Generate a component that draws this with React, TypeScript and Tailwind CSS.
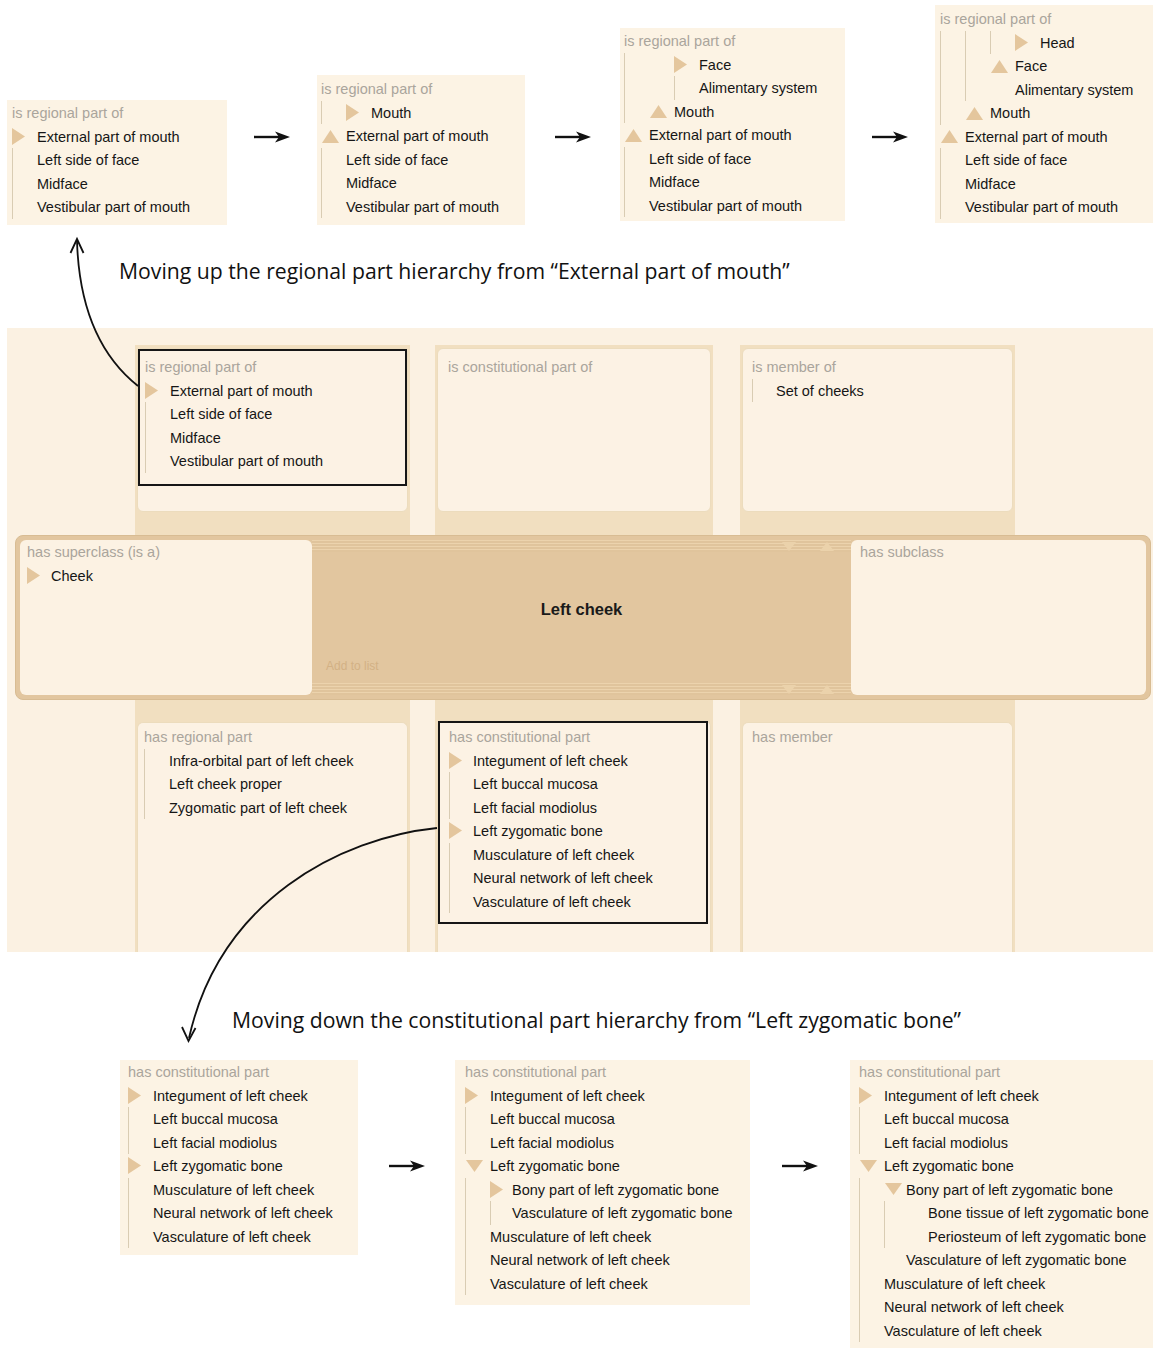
import React from "react";
import clsx from "clsx";

type Dir = "right" | "up" | "down";
type Row = { label: string; depth: number; icon?: Dir; guides?: number[] };

const TRI = "#e4c69d";

const Tri = ({ dir }: { dir: Dir }) => {
  if (dir === "right")
    return (
      <svg width="13" height="17" viewBox="0 0 13 17" className="shrink-0">
        <polygon points="0,0 13,8.5 0,17" fill={TRI} />
      </svg>
    );
  if (dir === "up")
    return (
      <svg width="17" height="13" viewBox="0 0 17 13" className="ml-[1px] mt-[1px] shrink-0">
        <polygon points="8.5,0 17,13 0,13" fill={TRI} />
      </svg>
    );
  return (
    <svg width="17" height="12" viewBox="0 0 17 12" className="ml-[1px] shrink-0">
      <polygon points="0,0 17,0 8.5,12" fill={TRI} />
    </svg>
  );
};

const Tree = ({
  header,
  rows,
  first = "w-[25px]",
  step = "w-[25px]",
}: {
  header: string;
  rows: Row[];
  first?: string;
  step?: string;
}) => (
  <div className="text-[14.5px]">
    <div className="h-[23.5px] leading-[24px] whitespace-nowrap text-[#aaa59c]">{header}</div>
    {rows.map((r, i) => (
      <div key={i} className="flex h-[23.5px] items-stretch whitespace-nowrap text-[#161616]">
        {Array.from({ length: r.depth + 1 }, (_, l) => (
          <span
            key={l}
            className={clsx(
              "flex shrink-0 items-center",
              l === 0 ? first : step,
              r.guides?.includes(l) && "border-l border-[#d9ccb3]"
            )}
          >
            {l === r.depth && r.icon ? <Tri dir={r.icon} /> : null}
          </span>
        ))}
        <span className="leading-[24px]">{r.label}</span>
      </div>
    ))}
  </div>
);

const Arrow = ({ className }: { className: string }) => (
  <div className={clsx("flex shrink-0 justify-center", className)}>
    <svg width="36" height="16" viewBox="0 0 36 16">
      <line x1="0" y1="8" x2="28" y2="8" stroke="#111" strokeWidth="2.4" />
      <polygon points="21,2.5 36,8 21,13.5 25,8" fill="#111" />
    </svg>
  </div>
);

const base: Row[] = [
  { label: "Left side of face", depth: 0, guides: [0] },
  { label: "Midface", depth: 0, guides: [0] },
  { label: "Vestibular part of mouth", depth: 0, guides: [0] },
];

const up1: Row[] = [{ label: "External part of mouth", depth: 0, icon: "right" }, ...base];

const up2: Row[] = [
  { label: "Mouth", depth: 1, icon: "right", guides: [0] },
  { label: "External part of mouth", depth: 0, icon: "up" },
  ...base,
];

const up3: Row[] = [
  { label: "Face", depth: 2, icon: "right", guides: [0] },
  { label: "Alimentary system", depth: 2, guides: [0, 2] },
  { label: "Mouth", depth: 1, icon: "up", guides: [0] },
  { label: "External part of mouth", depth: 0, icon: "up" },
  ...base,
];

const up4: Row[] = [
  { label: "Head", depth: 3, icon: "right", guides: [0, 1, 2] },
  { label: "Face", depth: 2, icon: "up", guides: [0, 1] },
  { label: "Alimentary system", depth: 2, guides: [0, 1] },
  { label: "Mouth", depth: 1, icon: "up", guides: [0] },
  { label: "External part of mouth", depth: 0, icon: "up" },
  ...base,
];

const tail: Row[] = [
  { label: "Musculature of left cheek", depth: 0, guides: [0] },
  { label: "Neural network of left cheek", depth: 0, guides: [0] },
  { label: "Vasculature of left cheek", depth: 0, guides: [0] },
];

const head: Row[] = [
  { label: "Integument of left cheek", depth: 0, icon: "right" },
  { label: "Left buccal mucosa", depth: 0, guides: [0] },
  { label: "Left facial modiolus", depth: 0, guides: [0] },
];

const down1: Row[] = [...head, { label: "Left zygomatic bone", depth: 0, icon: "right" }, ...tail];

const down2: Row[] = [
  ...head,
  { label: "Left zygomatic bone", depth: 0, icon: "down" },
  { label: "Bony part of left zygomatic bone", depth: 1, icon: "right", guides: [0] },
  { label: "Vasculature of left zygomatic bone", depth: 1, guides: [0, 1] },
  ...tail,
];

const down3: Row[] = [
  ...head,
  { label: "Left zygomatic bone", depth: 0, icon: "down" },
  { label: "Bony part of left zygomatic bone", depth: 1, icon: "down", guides: [0] },
  { label: "Bone tissue of left zygomatic bone", depth: 2, guides: [0, 1] },
  { label: "Periosteum of left zygomatic bone", depth: 2, guides: [0, 1] },
  { label: "Vasculature of left zygomatic bone", depth: 1, guides: [0] },
  ...tail,
];

const Stripe = () => (
  <div className="flex h-[12px] shrink-0 items-center justify-end gap-[24px] bg-[repeating-linear-gradient(to_bottom,#ecd3ad_0px,#ecd3ad_1px,#e0c49c_1px,#e0c49c_3px)] pr-[17px]">
    <svg width="14" height="9" viewBox="0 0 14 9">
      <polygon points="0,0 14,0 7,9" fill="#ebd2ab" />
    </svg>
    <svg width="14" height="9" viewBox="0 0 14 9">
      <polygon points="7,0 14,9 0,9" fill="#ebd2ab" />
    </svg>
  </div>
);

export default function App() {
  return (
    <div className="relative h-[1348px] w-[1153px] overflow-hidden bg-white font-['Liberation_Sans',Arial,sans-serif]">
      {/* top sequence */}
      <div className="flex h-[240px] items-start">
        <div className="ml-[7px] mt-[100px] h-[125px] w-[220px] shrink-0 bg-[#fcf3e4] pl-[5px] pt-[1px]">
          <Tree header="is regional part of" rows={up1} />
        </div>
        <Arrow className="mt-[129px] w-[90px]" />
        <div className="mt-[75px] h-[150px] w-[208px] shrink-0 bg-[#fcf3e4] pl-[4px] pt-[2px]">
          <Tree header="is regional part of" rows={up2} />
        </div>
        <Arrow className="mt-[129px] w-[95px]" />
        <div className="mt-[28px] h-[193px] w-[225px] shrink-0 bg-[#fcf3e4] pl-[4px] pt-[1px]">
          <Tree header="is regional part of" rows={up3} />
        </div>
        <Arrow className="mt-[129px] w-[90px]" />
        <div className="mt-[5px] h-[218px] w-[218px] shrink-0 bg-[#fcf3e4] pl-[5px] pt-[2px]">
          <Tree header="is regional part of" rows={up4} />
        </div>
      </div>

      <div className="h-[88px] whitespace-nowrap pl-[119px] pt-[18px] font-['Open_Sans',sans-serif] text-[21.2px] leading-[26px] text-[#111]">
        Moving up the regional part hierarchy from “External part of mouth”
      </div>

      {/* browser */}
      <div className="ml-[7px] h-[624px] w-[1146px] bg-[#fbf1e2]">
        <div className="flex h-[207px] pl-[128px] pt-[17px]">
          <div className="h-[190px] w-[275px] shrink-0 bg-[#f1dfc0] px-[2px] pt-[3px]">
            <div className="h-[164px] rounded-[6px] border border-[#ecdcbd] bg-[#fcf2e4]">
              <div className="h-[137px] border-2 border-[#161616] pl-[5px] pt-[4px]">
                <Tree
                  header="is regional part of"
                  rows={[{ label: "External part of mouth", depth: 0, icon: "right" }, ...base]}
                />
              </div>
            </div>
          </div>
          <div className="ml-[25px] h-[190px] w-[278px] shrink-0 bg-[#f1dfc0] px-[2px] pt-[3px]">
            <div className="h-[164px] rounded-[6px] border border-[#ecdcbd] bg-[#fcf2e4] pl-[10px] pt-[6px]">
              <Tree header="is constitutional part of" rows={[]} />
            </div>
          </div>
          <div className="ml-[27px] h-[190px] w-[275px] shrink-0 bg-[#f1dfc0] px-[2px] pt-[3px]">
            <div className="h-[164px] rounded-[6px] border border-[#ecdcbd] bg-[#fcf2e4] pl-[9px] pt-[6px]">
              <Tree
                header="is member of"
                first="w-[24px]"
                rows={[{ label: "Set of cheeks", depth: 0, guides: [0] }]}
              />
            </div>
          </div>
        </div>

        <div className="ml-[8px] flex h-[165px] w-[1136px] rounded-[8px] border border-[#d8bc93] bg-[#e2c69f] p-[4px]">
          <div className="w-[292px] shrink-0 rounded-[6px] bg-[#fcf2e3] pl-[7px]">
            <Tree header="has superclass (is a)" rows={[{ label: "Cheek", depth: 0, icon: "right" }]} first="w-[24px]" />
          </div>
          <div className="flex flex-1 flex-col">
            <Stripe />
            <div className="flex h-[104px] items-center justify-center pt-[10px] text-[16.5px] font-bold text-[#1a1a1a]">
              Left cheek
            </div>
            <div className="h-[20px] pl-[14px] text-[12px] leading-[20px] text-[#d2b185]">Add to list</div>
            <div className="flex-1" />
            <Stripe />
          </div>
          <div className="w-[295px] shrink-0 rounded-[6px] bg-[#fcf2e3] pl-[9px]">
            <Tree header="has subclass" rows={[]} />
          </div>
        </div>

        <div className="flex h-[252px] pl-[128px]">
          <div className="h-full w-[275px] shrink-0 bg-[#f1dfc0] px-[2px] pt-[22px]">
            <div className="h-full rounded-t-[6px] border border-b-0 border-[#ecdcbd] bg-[#fcf2e4] pl-[6px] pt-[2px]">
              <Tree
                header="has regional part"
                rows={[
                  { label: "Infra-orbital part of left cheek", depth: 0, guides: [0] },
                  { label: "Left cheek proper", depth: 0, guides: [0] },
                  { label: "Zygomatic part of left cheek", depth: 0, guides: [0] },
                ]}
              />
            </div>
          </div>
          <div className="ml-[25px] h-full w-[278px] shrink-0 bg-[#f1dfc0] px-[2px] pt-[20px]">
            <div className="h-full rounded-t-[6px] border border-b-0 border-[#ecdcbd] bg-[#fcf2e4]">
              <div className="h-[203px] w-[270px] border-2 border-[#161616] pl-[9px] pt-[2px]">
                <Tree header="has constitutional part" rows={down1} first="w-[24px]" />
              </div>
            </div>
          </div>
          <div className="ml-[27px] h-full w-[275px] shrink-0 bg-[#f1dfc0] px-[2px] pt-[22px]">
            <div className="h-full rounded-t-[6px] border border-b-0 border-[#ecdcbd] bg-[#fcf2e4] pl-[9px] pt-[2px]">
              <Tree header="has member" rows={[]} />
            </div>
          </div>
        </div>
      </div>

      <div className="h-[108px] whitespace-nowrap pl-[232px] pt-[55px] font-['Open_Sans',sans-serif] text-[21.2px] leading-[26px] text-[#111]">
        Moving down the constitutional part hierarchy from “Left zygomatic bone”
      </div>

      {/* bottom sequence */}
      <div className="flex items-start">
        <div className="ml-[120px] h-[195px] w-[238px] shrink-0 bg-[#fcf3e4] pl-[8px]">
          <Tree header="has constitutional part" rows={down1} />
        </div>
        <Arrow className="mt-[98px] w-[97px]" />
        <div className="h-[245px] w-[295px] shrink-0 bg-[#fcf3e4] pl-[10px]">
          <Tree header="has constitutional part" rows={down2} step="w-[22px]" />
        </div>
        <Arrow className="mt-[98px] w-[100px]" />
        <div className="h-[290px] w-[303px] shrink-0 bg-[#fcf3e4] pl-[9px]">
          <Tree header="has constitutional part" rows={down3} step="w-[22px]" />
        </div>
      </div>

      {/* annotation curves */}
      <svg
        className="pointer-events-none absolute left-0 top-0"
        width="1153"
        height="1348"
        viewBox="0 0 1153 1348"
        fill="none"
      >
        <path d="M77 241 Q 80 340 138 386" stroke="#111" strokeWidth="1.8" />
        <polyline points="70.5,253 77,239 83.5,253" stroke="#111" strokeWidth="1.8" />
        <path d="M437 828 C 340 838 220 900 189 1038" stroke="#111" strokeWidth="1.8" />
        <polyline points="182,1027 188.5,1041 195.5,1028" stroke="#111" strokeWidth="1.8" />
      </svg>
    </div>
  );
}
